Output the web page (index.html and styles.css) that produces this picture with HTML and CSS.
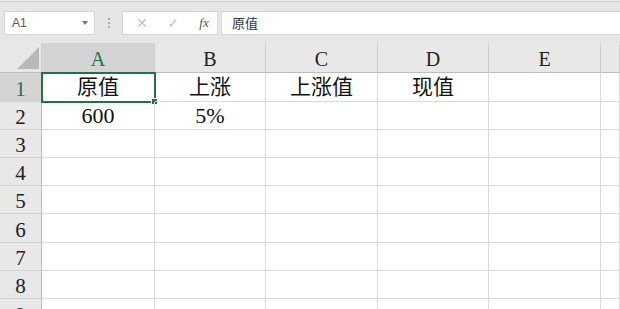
FILE: index.html
```html
<!DOCTYPE html>
<html lang="zh-CN">
<head>
  <meta charset="UTF-8">
  <title>工作表</title>
  <link rel="stylesheet" href="styles.css">
</head>
<body>
  <div class="toolbar">
    <div class="name-box">
      <span>A1</span>
      <span class="caret"></span>
    </div>
    <div class="grip"><i></i><i></i><i></i></div>
    <div class="fx-buttons">
      <span class="btn cancel">&#x2715;</span>
      <span class="btn ok">&#x2713;</span>
      <span class="btn fx">fx</span>
    </div>
    <div class="formula">原值</div>
  </div>

  <div class="sheet">
    <div class="row head">
      <div class="corner"><span class="tri"></span></div>
      <div class="col-head active">A</div>
      <div class="col-head">B</div>
      <div class="col-head">C</div>
      <div class="col-head">D</div>
      <div class="col-head">E</div>
      <div class="col-head"></div>
    </div>
    <div class="row tall">
      <div class="row-head active">1</div>
      <div class="cell selected">原值<span class="handle"></span></div>
      <div class="cell">上涨</div>
      <div class="cell">上涨值</div>
      <div class="cell">现值</div>
      <div class="cell"></div>
      <div class="cell"></div>
    </div>
    <div class="row">
      <div class="row-head">2</div>
      <div class="cell num">600</div>
      <div class="cell num">5%</div>
      <div class="cell"></div>
      <div class="cell"></div>
      <div class="cell"></div>
      <div class="cell"></div>
    </div>
    <div class="row">
      <div class="row-head">3</div>
      <div class="cell"></div><div class="cell"></div><div class="cell"></div>
      <div class="cell"></div><div class="cell"></div><div class="cell"></div>
    </div>
    <div class="row">
      <div class="row-head">4</div>
      <div class="cell"></div><div class="cell"></div><div class="cell"></div>
      <div class="cell"></div><div class="cell"></div><div class="cell"></div>
    </div>
    <div class="row">
      <div class="row-head">5</div>
      <div class="cell"></div><div class="cell"></div><div class="cell"></div>
      <div class="cell"></div><div class="cell"></div><div class="cell"></div>
    </div>
    <div class="row tall">
      <div class="row-head">6</div>
      <div class="cell"></div><div class="cell"></div><div class="cell"></div>
      <div class="cell"></div><div class="cell"></div><div class="cell"></div>
    </div>
    <div class="row">
      <div class="row-head">7</div>
      <div class="cell"></div><div class="cell"></div><div class="cell"></div>
      <div class="cell"></div><div class="cell"></div><div class="cell"></div>
    </div>
    <div class="row">
      <div class="row-head">8</div>
      <div class="cell"></div><div class="cell"></div><div class="cell"></div>
      <div class="cell"></div><div class="cell"></div><div class="cell"></div>
    </div>
    <div class="row last">
      <div class="row-head">9</div>
      <div class="cell"></div><div class="cell"></div><div class="cell"></div>
      <div class="cell"></div><div class="cell"></div><div class="cell"></div>
    </div>
  </div>
</body>
</html>
```

FILE: styles.css
```css
body {
  margin: 0;
  background: #ffffff;
  font-family: "Liberation Serif", "Noto Sans CJK SC", serif;
  overflow: hidden;
}
.toolbar {
  height: 43px;
  background: linear-gradient(#e9e9e9 1px, #d3d3d3 1px, #d3d3d3 2px, #e6e6e6 2px);
  display: flex;
  align-items: flex-start;
  padding: 11px 0 0 4px;
  box-sizing: border-box;
  font-family: "Noto Sans CJK SC", "Noto Sans", sans-serif;
}
.name-box {
  width: 91px;
  height: 24px;
  box-sizing: border-box;
  background: #ffffff;
  border: 1px solid #d6d6d6;
  display: flex;
  align-items: center;
  justify-content: space-between;
  padding: 0 6px 0 7px;
  font-size: 12px;
  color: #555;
  font-family: "Liberation Sans", sans-serif;
}
.caret {
  width: 0;
  height: 0;
  border-left: 3.5px solid transparent;
  border-right: 3.5px solid transparent;
  border-top: 4px solid #777;
}
.grip {
  width: 27px;
  height: 24px;
  display: flex;
  flex-direction: column;
  align-items: center;
  justify-content: center;
  gap: 2px;
}
.grip i {
  width: 2px;
  height: 2px;
  background: #aaa;
}
.fx-buttons {
  width: 96px;
  height: 24px;
  box-sizing: border-box;
  background: #ffffff;
  border: 1px solid #d6d6d6;
  display: flex;
  align-items: center;
  padding-left: 11px;
  gap: 15px;
}
.btn {
  width: 16px;
  text-align: center;
  color: #c4c4c4;
  font-size: 14px;
  font-family: "DejaVu Sans", sans-serif;
}
.btn.fx {
  color: #555;
  font-family: "Liberation Serif", serif;
  font-style: italic;
  font-size: 13px;
}
.formula {
  flex: 1;
  margin-left: 3px;
  height: 24px;
  box-sizing: border-box;
  background: #ffffff;
  border: 1px solid #d6d6d6;
  border-right: none;
  padding-left: 10px;
  font-size: 13px;
  line-height: 22px;
  color: #333;
}
.row {
  display: grid;
  grid-template-columns: 42px 113px 111px 112px 111px 112px 1fr;
  grid-template-rows: 100%;
  height: 28px;
  line-height: 1;
}
.row.tall {
  height: 29px;
}
.row.head {
  height: 30px;
}
.row.last {
  height: 11px;
  overflow: hidden;
}
.row > div {
  box-sizing: border-box;
  border-right: 1px solid #dadada;
  border-bottom: 1px solid #dadada;
  display: flex;
  align-items: center;
  justify-content: center;
}
.corner {
  background: #e8e8e8;
  position: relative;
}
.tri {
  position: absolute;
  right: 2px;
  bottom: 3px;
  width: 22px;
  height: 22px;
  background: #b9b9b9;
  clip-path: polygon(100% 0, 100% 100%, 0 100%);
}
.row.head > div {
  background: #e8e8e8;
  border-right-color: #cfcfcf;
  border-bottom-color: #bdbdbd;
}
.col-head {
  font-size: 20px;
  color: #222;
  padding-top: 2px;
}
.row-head {
  background: #e8e8e8;
  font-size: 21px;
  color: #222;
  padding-top: 4px;
  border-right-color: #bdbdbd !important;
  border-bottom-color: #d2d2d2 !important;
}
.row.last .row-head {
  align-items: flex-start;
  padding-top: 6px;
}
.row.head > .active,
.row-head.active {
  background: #d4d4d4;
  color: #217346;
}
.cell {
  font-size: 21px;
  color: #111;
  position: relative;
}
.cell.num {
  font-family: "Liberation Serif", serif;
  font-size: 22px;
}
.selected::before {
  content: "";
  position: absolute;
  left: -1px;
  top: -1px;
  right: -2px;
  bottom: -2px;
  border: 2px solid #217346;
  box-sizing: border-box;
}
.handle {
  position: absolute;
  right: -4px;
  bottom: -4px;
  width: 5px;
  height: 5px;
  background: #217346;
  border: 1px solid #ffffff;
}
```
